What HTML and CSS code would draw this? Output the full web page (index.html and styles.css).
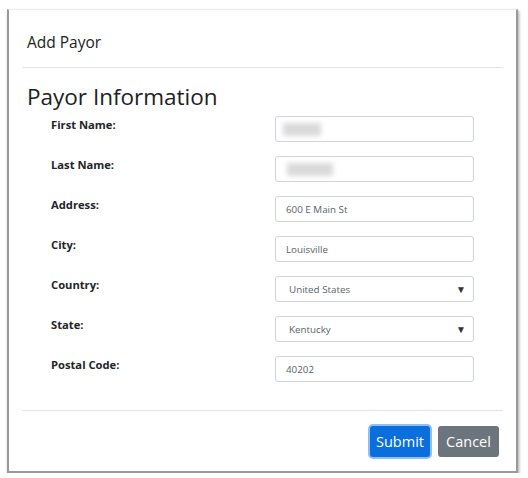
FILE: index.html
```html
<!DOCTYPE html>
<html>
<head>
<meta charset="utf-8">
<link rel="stylesheet" href="styles.css">
</head>
<body>
<div class="dialog">
  <div class="header">Add Payor</div>
  <div class="body">
    <h2 class="title">Payor Information</h2>
    <div class="form">
      <div class="row"><label class="lbl">First Name:</label><div class="field"><span class="blur blur1"></span></div></div>
      <div class="row"><label class="lbl">Last Name:</label><div class="field"><span class="blur blur2"></span></div></div>
      <div class="row"><label class="lbl">Address:</label><div class="field">600 E Main St</div></div>
      <div class="row"><label class="lbl">City:</label><div class="field">Louisville</div></div>
      <div class="row"><label class="lbl">Country:</label><div class="field select"><span>United States</span><span class="arrow">▼</span></div></div>
      <div class="row"><label class="lbl">State:</label><div class="field select"><span>Kentucky</span><span class="arrow">▼</span></div></div>
      <div class="row"><label class="lbl">Postal Code:</label><div class="field">40202</div></div>
    </div>
  </div>
  <div class="footer">
    <button class="btn btn-primary">Submit</button>
    <button class="btn btn-secondary">Cancel</button>
  </div>
</div>
</body>
</html>
```
FILE: styles.css
```css
* { box-sizing: border-box; }
html, body { margin: 0; padding: 0; background: #fff; }
body {
  font-family: "Open Sans", "Noto Sans", sans-serif;
  color: #212529;
  padding: 9px 0 0 7px;
}
.dialog {
  width: 511px;
  height: 464px;
  background: #fff;
  border-left: 2px solid #9a9a9a;
  border-right: 2px solid #9a9a9a;
  border-bottom: 2px solid #9a9a9a;
  border-top: 1px solid #ececec;
  box-shadow: 1px 2px 3px rgba(0,0,0,0.35);
  padding: 0 13px 0 13px;
  display: flex;
  flex-direction: column;
}
.header {
  height: 58px;
  padding: 22px 0 0 5px;
  font-size: 15.5px;
  line-height: 20px;
  color: #1d2124;
  border-bottom: 1px solid #e3e3e3;
}
.body { flex: 1; padding: 0 5px; }
.title {
  margin: 15px 0 0 0;
  font-size: 22.5px;
  font-weight: 500;
  line-height: 28px;
  color: #1d2124;
}
.form { display: flex; flex-direction: column; gap: 14px; margin-top: 5px; }
.row {
  display: grid;
  grid-template-columns: 248px 199px;
  align-items: start;
}
.lbl {
  padding: 1px 0 0 24px;
  font-size: 11.2px;
  font-weight: 700;
  line-height: 16px;
}
.field {
  height: 26px;
  border: 1px solid #ced4da;
  border-radius: 3px;
  font-size: 9.8px;
  color: #5a6268;
  padding: 0 10px;
  display: flex;
  align-items: center;
}
.select { padding: 0 7px 0 13px; justify-content: space-between; }
.arrow { font-size: 10px; color: #333; }
.blur { display: block; height: 13px; background: #dadada; filter: blur(2.5px); }
.blur1 { width: 38px; margin-left: -3px; }
.blur2 { width: 46px; margin-left: 1px; }
.footer {
  height: 61px;
  border-top: 1px solid #e3e3e3;
  display: flex;
  justify-content: flex-end;
  align-items: center;
  gap: 8px;
  padding: 0 4px 0 0;
}
.btn {
  font-family: "Open Sans", "Noto Sans", sans-serif;
  font-size: 14.5px;
  color: #fff;
  border: none;
  border-radius: 3px;
  height: 31px;
  padding: 0;
  line-height: 31px;
}
.btn-primary {
  background: #0a6fdc;
  box-shadow: 0 0 0 2px #8ec0f5;
  width: 60px;
}
.btn-secondary { background: #6c757d; width: 61px; }
```
